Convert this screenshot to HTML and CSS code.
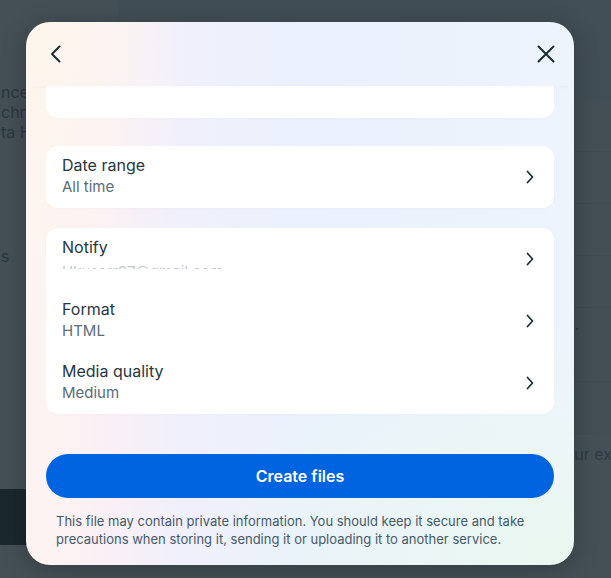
FILE: index.html
```html
<!DOCTYPE html>
<html lang="en">
<head>
<meta charset="utf-8">
<title>Download your information</title>
<link rel="stylesheet" href="styles.css">
</head>
<body>
<div class="page">
  <aside class="side">
    <div class="side-links">
      <div class="side-link">nces</div>
      <div class="side-link">chnologies</div>
      <div class="side-link">ta Horizon</div>
    </div>
    <div class="side-link side-gap">s</div>
    <div class="side-fill"></div>
    <div class="side-block"></div>
  </aside>
  <main class="main">
    <div class="main-top"></div>
    <section class="panel">
      <div class="panel-row"></div>
      <div class="panel-row"></div>
      <div class="panel-row"></div>
      <div class="panel-row"></div>
      <div class="panel-row panel-row-alt">.</div>
      <div class="panel-row"></div>
    </section>
    <p class="main-note">your exp</p>
  </main>
</div>
<div class="overlay"></div>

<div class="modal" role="dialog">
  <header class="modal-head">
    <button class="icon-btn" aria-label="Back">
      <svg width="24" height="24" viewBox="0 0 24 24"><path d="M15.5 4.5 L8 12 L15.5 19.5" fill="none" stroke="#1c2b33" stroke-width="2" stroke-linecap="round" stroke-linejoin="round"/></svg>
    </button>
    <button class="icon-btn" aria-label="Close">
      <svg width="24" height="24" viewBox="0 0 24 24"><path d="M4.5 4.5 L19.5 19.5 M19.5 4.5 L4.5 19.5" fill="none" stroke="#1c2b33" stroke-width="2" stroke-linecap="round"/></svg>
    </button>
  </header>
  <div class="modal-body">
    <div class="card card-top"></div>

    <div class="card card-gap">
      <div class="row">
        <div class="row-text">
          <div class="row-title">Date range</div>
          <div class="row-sub">All time</div>
        </div>
        <svg class="chev" width="8" height="14" viewBox="0 0 8 14"><path d="M1.5 1.5 L6.5 7 L1.5 12.5" fill="none" stroke="#1c2b33" stroke-width="1.7" stroke-linecap="round" stroke-linejoin="round"/></svg>
      </div>
    </div>

    <div class="card card-gap2">
      <div class="row">
        <div class="row-text">
          <div class="row-title">Notify</div>
          <div class="row-sub row-hidden"><span>Hkusarr97@gmail.com</span></div>
        </div>
        <svg class="chev" width="8" height="14" viewBox="0 0 8 14"><path d="M1.5 1.5 L6.5 7 L1.5 12.5" fill="none" stroke="#1c2b33" stroke-width="1.7" stroke-linecap="round" stroke-linejoin="round"/></svg>
      </div>
      <div class="row">
        <div class="row-text">
          <div class="row-title">Format</div>
          <div class="row-sub">HTML</div>
        </div>
        <svg class="chev" width="8" height="14" viewBox="0 0 8 14"><path d="M1.5 1.5 L6.5 7 L1.5 12.5" fill="none" stroke="#1c2b33" stroke-width="1.7" stroke-linecap="round" stroke-linejoin="round"/></svg>
      </div>
      <div class="row">
        <div class="row-text">
          <div class="row-title">Media quality</div>
          <div class="row-sub">Medium</div>
        </div>
        <svg class="chev" width="8" height="14" viewBox="0 0 8 14"><path d="M1.5 1.5 L6.5 7 L1.5 12.5" fill="none" stroke="#1c2b33" stroke-width="1.7" stroke-linecap="round" stroke-linejoin="round"/></svg>
      </div>
    </div>

    <button class="primary">Create files</button>
    <p class="note">This file may contain private information. You should keep it secure and take precautions when storing it, sending it or uploading it to another service.</p>
  </div>
</div>
</body>
</html>
```

FILE: styles.css
```css
* { box-sizing: border-box; }

html, body {
  margin: 0;
  padding: 0;
  width: 611px;
  height: 578px;
  overflow: hidden;
}

body {
  font-family: Inter, "Noto Sans", "Liberation Sans", sans-serif;
  background: #ffffff;
  position: relative;
}

/* background page */
.page {
  display: grid;
  grid-template-columns: 119px 1fr;
  height: 578px;
}

.side {
  display: flex;
  flex-direction: column;
  background: #ffffff;
  padding-top: 82px;
}

.side-links {
  display: flex;
  flex-direction: column;
}

.side-link {
  font-size: 16px;
  line-height: 20px;
  color: #5f6b73;
  padding-left: 1px;
  white-space: nowrap;
}

.side-gap {
  margin-top: 104px;
}

.side-fill { flex: 1; }

.side-block {
  height: 56px;
  background: #0a1217;
  margin-bottom: 33px;
}

.main {
  display: flex;
  flex-direction: column;
  background: #ffffff;
  min-width: 0;
  overflow: hidden;
}

.main-top {
  height: 100px;
  background: #f2f3f5;
}

.panel {
  display: flex;
  flex-direction: column;
  background: #fafafa;
}

.panel-row {
  height: 52px;
  border-bottom: 1px solid #e3e5e8;
}

.panel-row-alt {
  height: 74px;
  background: #f7f8f9;
  color: #3c4a52;
  font-size: 14px;
  padding: 8px 0 0 456px;
}

.main-note {
  margin: 10px 0 0 0;
  font-size: 16px;
  color: #7c878e;
  white-space: nowrap;
  padding-left: 437px;
}

.overlay {
  position: absolute;
  inset: 0;
  background: rgba(30, 44, 52, 0.83);
}

/* modal */
.modal {
  position: absolute;
  left: 26px;
  top: 22px;
  width: 548px;
  height: 543px;
  border-radius: 24px;
  overflow: hidden;
  display: flex;
  flex-direction: column;
  box-shadow: 0 4px 24px rgba(0, 0, 0, 0.25);
  background:
    radial-gradient(ellipse 70% 45% at 100% 100%, rgba(234, 248, 240, 1) 0%, rgba(234, 248, 240, 0) 100%),
    radial-gradient(ellipse 30% 60% at 0% 0%, rgba(253, 246, 236, 1) 0%, rgba(253, 246, 236, 0) 100%),
    linear-gradient(90deg, #fcf4f1 0%, #fbf0f4 12%, #f0f0fb 28%, #eaf1fc 50%, #ebf2fc 75%, #eef4fc 100%);
}

.modal-head {
  height: 64px;
  flex: none;
  display: flex;
  align-items: center;
  justify-content: space-between;
  padding: 0 16px 0 18px;
  position: relative;
  z-index: 2;
  background: transparent;
  box-shadow: 0 3px 6px -4px rgba(0, 0, 0, 0.06);
}

.icon-btn {
  width: 24px;
  height: 24px;
  padding: 0;
  border: 0;
  background: none;
  display: flex;
  align-items: center;
  justify-content: center;
}

.modal-body {
  flex: 1;
  overflow: hidden;
  padding: 0 20px;
  display: flex;
  flex-direction: column;
}

.card {
  background: #ffffff;
  border-radius: 12px;
  box-shadow: 0 1px 3px rgba(0, 0, 0, 0.02);
}

.card-top {
  height: 62px;
  margin-top: -30px;
  flex: none;
}

.card-gap { margin-top: 28px; }
.card-gap2 { margin-top: 20px; }

.row {
  height: 62px;
  display: flex;
  align-items: center;
  justify-content: space-between;
  padding: 0 20px 0 16px;
}

.row-text {
  display: flex;
  flex-direction: column;
  padding-bottom: 2px;
}

.row-title {
  font-size: 16px;
  line-height: 22px;
  color: #283740;
}

.row-sub {
  font-size: 15px;
  line-height: 22px;
  color: #5d6c77;
}

.row-hidden {
  height: 22px;
  position: relative;
  overflow: hidden;
}

.row-hidden span {
  display: block;
  height: 8px;
  overflow: hidden;
  margin-top: 3px;
  color: #c0c8ce;
  filter: blur(0.3px);
}

.chev { flex: none; }

.primary {
  margin-top: 40px;
  height: 44px;
  border: 0;
  border-radius: 22px;
  background: #0064e0;
  color: #ffffff;
  font-family: inherit;
  font-size: 16px;
  font-weight: 600;
  flex: none;
}

.note {
  margin: 14px 0 0 0;
  padding: 0 10px;
  font-size: 13px;
  line-height: 18px;
  color: #465a69;
}
```
